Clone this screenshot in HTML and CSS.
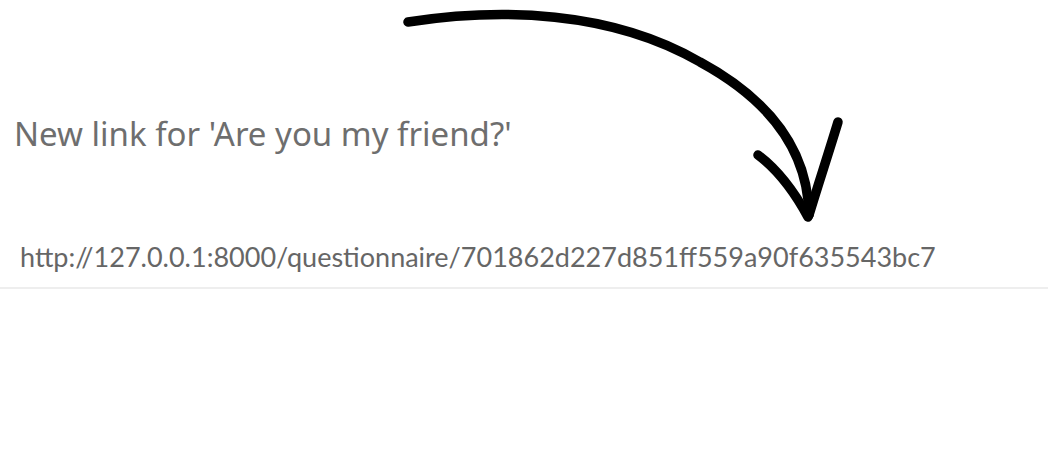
FILE: index.html
```
<!DOCTYPE html>
<html>
<head>
<meta charset="utf-8">
<link rel="stylesheet" href="styles.css">
</head>
<body>
<main class="page">
  <h2 class="title">New link for 'Are you my friend?'</h2>
  <div class="link-row">
    <span class="link">http://127.0.0.1:8000/questionnaire/701862d227d851ff559a90f635543bc7</span>
  </div>
  <svg class="arrow" width="1048" height="240" viewBox="0 0 1048 240" aria-hidden="true">
    <path d="M408 22 C 500 8, 610 10, 700 62 C 770 100, 808 150, 809 215" />
    <path d="M758 155 C 778 170, 795 193, 808 217" />
    <path d="M838 122 C 828 155, 818 185, 809 215" />
  </svg>
</main>
</body>
</html>
```
FILE: styles.css
```
html, body {
  margin: 0;
  padding: 0;
  background: #fff;
}
.page {
  position: relative;
  height: 450px;
  padding-top: 110px;
  box-sizing: border-box;
}
.title {
  margin: 0 0 0 14px;
  font-family: "Noto Sans", sans-serif;
  font-weight: 400;
  font-size: 33px;
  line-height: 48px;
  color: #6e6e6e;
}
.link-row {
  margin-top: 83px;
  padding: 0 0 14px 20px;
  border-bottom: 2px solid #eeeeee;
}
.link {
  font-family: "Lato", sans-serif;
  font-size: 27px;
  line-height: 32px;
  color: #666;
}
.arrow {
  position: absolute;
  left: 0;
  top: 0;
  fill: none;
  stroke: #000;
  stroke-width: 9.5;
  stroke-linecap: round;
  stroke-linejoin: round;
}
```
